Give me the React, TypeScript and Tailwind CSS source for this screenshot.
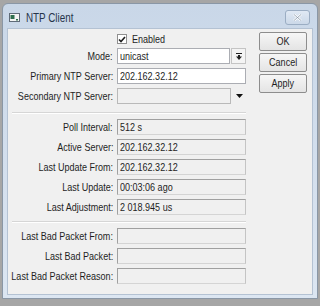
import React from 'react';

const font = { fontFamily: '"Liberation Sans", Arial, sans-serif' };

// the dialog font is narrower than Arial, so squeeze the glyphs horizontally
function Txt({ children, origin = 'left' }: { children: React.ReactNode; origin?: 'left' | 'right' | 'center' }) {
    const o = origin === 'left' ? 'origin-left' : origin === 'right' ? 'origin-right' : 'origin-center';
    return <span className={`inline-block whitespace-nowrap scale-x-[0.82] ${o}`}>{children}</span>;
}

function Row({ label, children }: { label: string; children: React.ReactNode }) {
    return (
        <div className="flex items-center h-4">
            <div className="w-[109px] pr-[4px] flex justify-end text-[11px] text-[#1e1e1e]">
                <Txt origin="right">{label}</Txt>
            </div>
            {children}
        </div>
    );
}

function ReadOnly({ value }: { value?: string }) {
    return (
        <div className="w-[129px] h-4 border border-[#a0a0a0] border-b-[#d4d4d4] border-r-[#c4c4c4] bg-[#f0f0f0] pl-[2px] text-[11px] leading-[14px] text-[#1e1e1e]">
            {value && <Txt>{value}</Txt>}
        </div>
    );
}

function Btn({ label }: { label: string }) {
    return (
        <div className="h-[19px] w-[48px] border border-[#8d8d8d] rounded-[2px] bg-gradient-to-b from-[#f6f6f6] to-[#e4e4e4] flex items-center justify-center text-[11px] text-[#1e1e1e]">
            <Txt origin="center">{label}</Txt>
        </div>
    );
}

function Separator() {
    return <div className="ml-[4px] w-[234px] h-[2px] border-t border-[#d6d6d6] border-b border-b-white" />;
}

export default function App() {
    return (
        <div className="w-[320px] h-[306px] bg-[#a6a6a6] pt-[3px] px-[2px]" style={font}>
            <div className="h-[296px] rounded-t-[6px] border border-[#8a97a6] bg-gradient-to-b from-[#c9d7e8] to-[#dce6f2] flex flex-col">
                {/* title bar */}
                <div className="h-[24px] flex items-center pl-[6px] pr-[7px]">
                    <svg width="11" height="9" viewBox="0 0 11 9" className="mr-[6px] mt-[2px]">
                        <rect x="0.5" y="0.5" width="10" height="8" fill="#f4f4f4" stroke="#5f6b78" />
                        <rect x="1.5" y="2" width="4" height="4" fill="#2f6f4f" />
                        <rect x="7" y="6" width="2" height="1.5" fill="#2f6f4f" />
                    </svg>
                    <span className="text-[12px] text-[#26344a] mt-[3px]"><Txt>NTP Client</Txt></span>
                    <div className="ml-auto mt-[3px] w-[25px] h-[15px] rounded-[3px] border border-[#9badc3] bg-gradient-to-b from-[#e0e9f4] to-[#cbd8e8] flex items-center justify-center">
                        <svg width="9" height="7" viewBox="0 0 9 7">
                            <path d="M1 0.5 L8 6.5 M8 0.5 L1 6.5" stroke="#ffffff" strokeWidth="2.2" />
                            <path d="M1 0.5 L8 6.5 M8 0.5 L1 6.5" stroke="#8796a8" strokeWidth="0.8" />
                        </svg>
                    </div>
                </div>
                {/* content */}
                <div className="flex-1 mx-[4px] mb-[3px] bg-[#f0f0f0] border border-[#b4c2d3] flex text-[11px] text-[#1e1e1e]">
                    <div className="w-[238px] pt-[5px] flex flex-col">
                        <div className="flex items-center h-[10px] pl-[109px]">
                            <div className="w-[10px] h-[10px] border border-[#8f8f8f] bg-white flex items-center justify-center">
                                <svg width="8" height="7" viewBox="0 0 8 7">
                                    <path d="M1 3.5 L3 5.5 L7 1" stroke="#1e1e1e" strokeWidth="1.6" fill="none" />
                                </svg>
                            </div>
                            <span className="ml-[5px]"><Txt>Enabled</Txt></span>
                        </div>
                        <div className="mt-[4px] flex flex-col gap-[4px]">
                            <Row label="Mode:">
                                <div className="w-[113px] h-4 border border-[#abadb3] bg-white pl-[2px] leading-[14px]"><Txt>unicast</Txt></div>
                                <div className="ml-[1px] w-[15px] h-4 border border-[#c4c4c4] bg-[#f4f4f4] flex items-center justify-center">
                                    <svg width="6" height="7" viewBox="0 0 6 7">
                                        <rect x="0" y="0" width="6" height="1" fill="#222" />
                                        <rect x="2" y="2" width="2" height="2" fill="#222" />
                                        <path d="M0 3.5 L6 3.5 L3 7 Z" fill="#222" />
                                    </svg>
                                </div>
                            </Row>
                            <Row label="Primary NTP Server:">
                                <div className="w-[129px] h-4 border border-[#abadb3] bg-white pl-[2px] leading-[14px]"><Txt>202.162.32.12</Txt></div>
                            </Row>
                            <Row label="Secondary NTP Server:">
                                <div className="w-[114px] h-4 border border-[#b9b9b9] bg-[#f0f0f0]" />
                                <svg width="7" height="4" viewBox="0 0 7 4" className="ml-[5px]">
                                    <path d="M0 0 L7 0 L3.5 4 Z" fill="#111" />
                                </svg>
                            </Row>
                        </div>
                        <div className="mt-[8px]"><Separator /></div>
                        <div className="mt-[5px] flex flex-col gap-[4px]">
                            <Row label="Poll Interval:"><ReadOnly value="512 s" /></Row>
                            <Row label="Active Server:"><ReadOnly value="202.162.32.12" /></Row>
                            <Row label="Last Update From:"><ReadOnly value="202.162.32.12" /></Row>
                            <Row label="Last Update:"><ReadOnly value="00:03:06 ago" /></Row>
                            <Row label="Last Adjustment:"><ReadOnly value="2 018.945 us" /></Row>
                        </div>
                        <div className="mt-[6px]"><Separator /></div>
                        <div className="mt-[5px] flex flex-col gap-[4px]">
                            <Row label="Last Bad Packet From:"><ReadOnly /></Row>
                            <Row label="Last Bad Packet:"><ReadOnly /></Row>
                            <Row label="Last Bad Packet Reason:"><ReadOnly /></Row>
                        </div>
                    </div>
                    <div className="pt-[3px] pl-[13px] flex flex-col gap-[2px]">
                        <Btn label="OK" />
                        <Btn label="Cancel" />
                        <Btn label="Apply" />
                    </div>
                </div>
            </div>
        </div>
    );
}
